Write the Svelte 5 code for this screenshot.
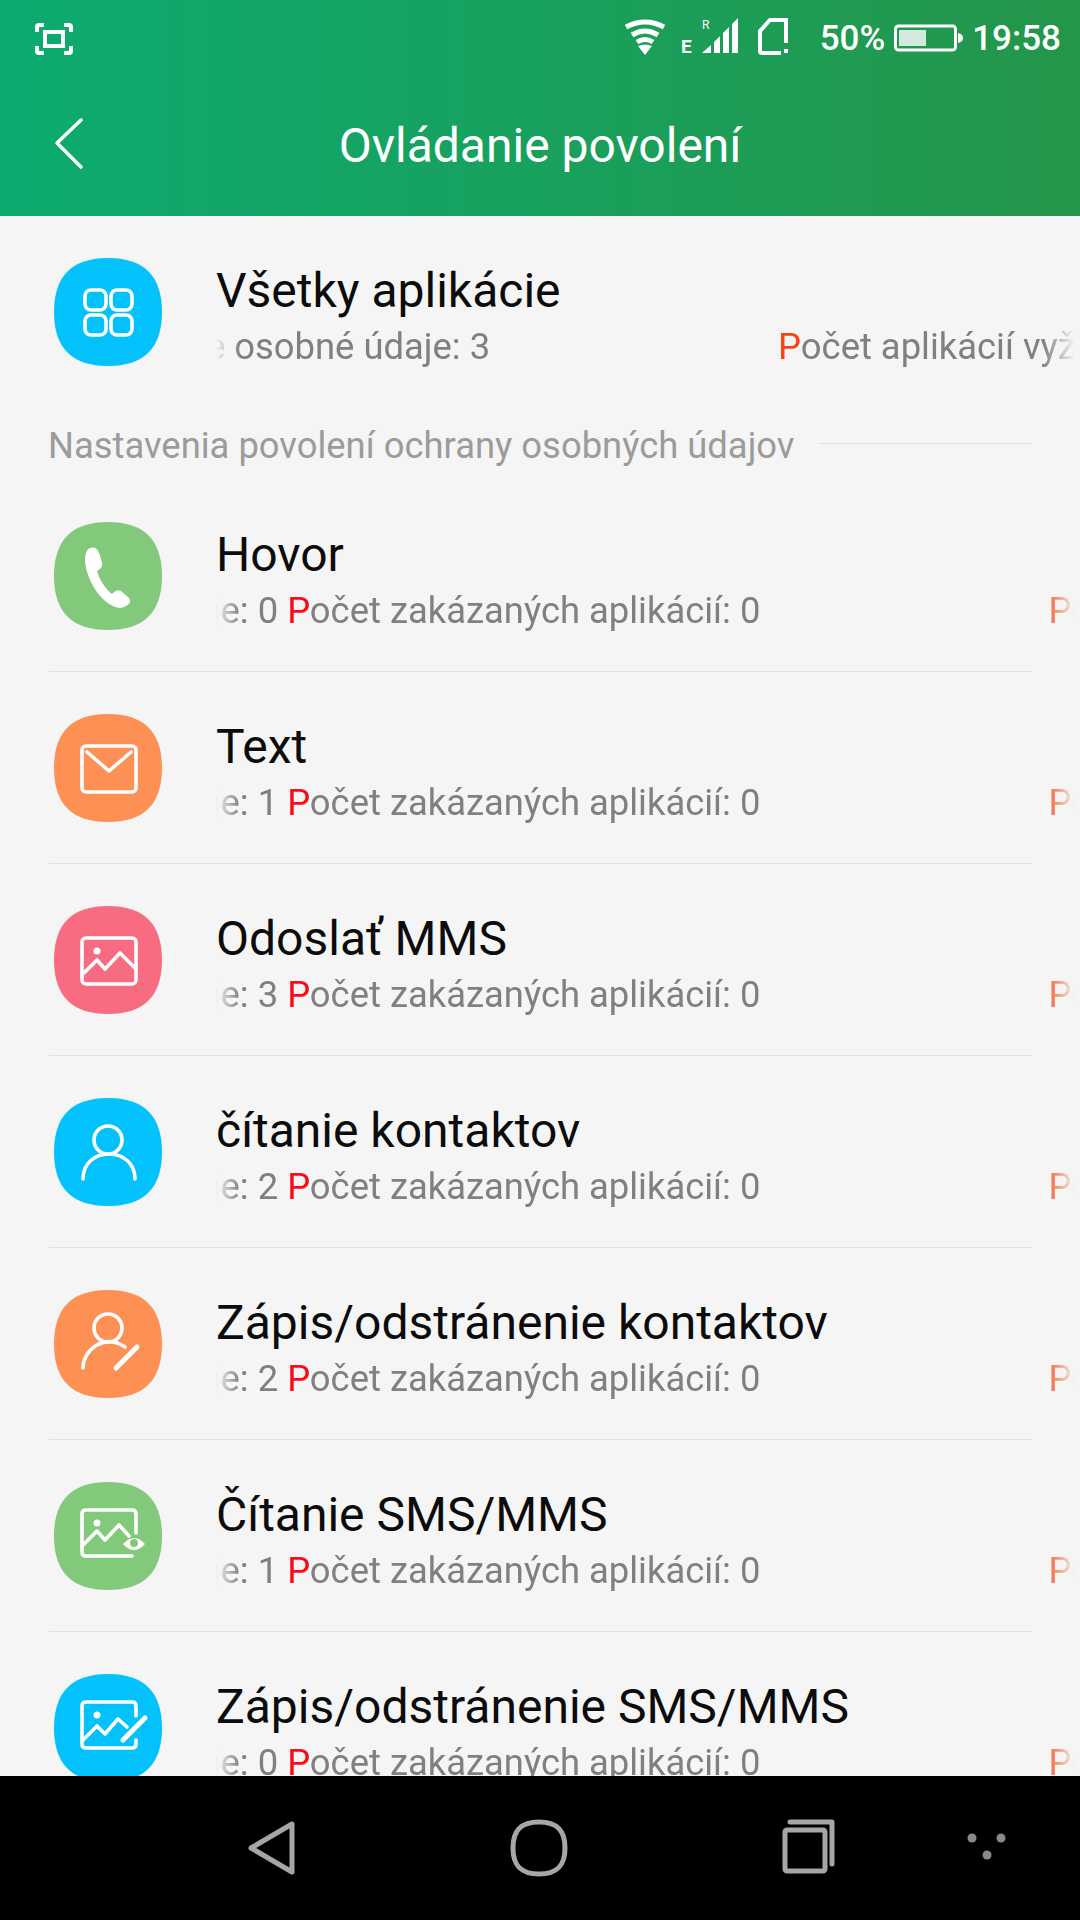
<script lang="ts">
  type Row = { title: string; icon: string; color: string; on: number };

  const rows: Row[] = [
    { title: 'Hovor', icon: 'phone', color: '#82c97c', on: 0 },
    { title: 'Text', icon: 'mail', color: '#fd9155', on: 1 },
    { title: 'Odoslať MMS', icon: 'image', color: '#f76c80', on: 3 },
    { title: 'čítanie kontaktov', icon: 'person', color: '#03c1fb', on: 2 },
    { title: 'Zápis/odstránenie kontaktov', icon: 'personEdit', color: '#fd9155', on: 2 },
    { title: 'Čítanie SMS/MMS', icon: 'imageEye', color: '#82c97c', on: 1 },
    { title: 'Zápis/odstránenie SMS/MMS', icon: 'imageEdit', color: '#03c1fb', on: 0 },
  ];
</script>

{#snippet glyph(name: string)}
  {#if name === 'grid'}
    <rect x="31" y="32" width="21" height="20" rx="6" />
    <rect x="57" y="32" width="21" height="20" rx="6" />
    <rect x="31" y="57" width="21" height="20" rx="6" />
    <rect x="57" y="57" width="21" height="20" rx="6" />
  {:else if name === 'phone'}
    <path class="solid" d="M36 26C41 24 44 27 46 33L48 41C49 45 46 47 43 49C45 57 52 68 58 72C61 69 64 67 67 69L74 75C78 79 76 82 72 84C66 88 58 85 50 78C40 69 32 52 31 40C31 32 32 28 36 26Z" />
  {:else if name === 'mail'}
    <rect x="28" y="32" width="54" height="46" rx="4" />
    <path d="M33 38L55 57L77 38" />
  {:else if name === 'image'}
    <rect x="28" y="32" width="54" height="46" rx="4" />
    <circle class="solid" cx="43" cy="45" r="3.5" />
    <path d="M29 68L43 54L51 63L66 47L82 63" />
  {:else if name === 'person'}
    <circle cx="54" cy="42" r="14" />
    <path d="M29 81C29 65 41 56 55 56C69 56 81 65 81 81" />
  {:else if name === 'personEdit'}
    <circle cx="54" cy="38" r="14" />
    <path d="M29 78C29 60 50 43 71 57" />
    <path class="pen" d="M83 57L62 78" />
  {:else if name === 'imageEye'}
    <path d="M82 51V32Q82 28 78 28H32Q28 28 28 32V70Q28 74 32 74H78" />
    <circle class="solid" cx="43" cy="41" r="3.5" />
    <path d="M29 63L43 49L51 58L65 43L75 54" />
    <path class="solid" d="M69 62Q80 50 91 62Q80 74 69 62Z" />
    <circle class="cut" cx="80" cy="61" r="4" />
  {:else if name === 'imageEdit'}
    <path d="M82 42V32Q82 28 78 28H32Q28 28 28 32V70Q28 74 32 74H78Q82 74 82 70V66" />
    <circle class="solid" cx="43" cy="41" r="3.5" />
    <path d="M29 66L43 52L51 60L64 45L73 53" />
    <path class="pen" d="M91 44L69 66" />
  {/if}
{/snippet}

{#snippet appIcon(name: string, color: string)}
  <svg class="app-icon" viewBox="0 0 108 108" width="108" height="108">
    <path d="M54 0C90 0 108 18 108 54C108 90 90 108 54 108C18 108 0 90 0 54C0 18 18 0 54 0Z" fill={color} />
    <g class="glyph" style="color: {color}">{@render glyph(name)}</g>
  </svg>
{/snippet}

{#snippet counts(on: number)}
  <span class="copy"><span class="orange">P</span>očet aplikácií vyžadujúce osobné údaje: {on} <span class="red">P</span>očet zakázaných aplikácií: 0</span>
{/snippet}

<div class="page">
  <header class="head">
    <div class="status">
      <svg class="shot" width="38" height="32" viewBox="0 0 38 32">
        <path d="M2 9V4Q2 2 4 2H9M29 2H34Q36 2 36 4V9M36 23V28Q36 30 34 30H29M9 30H4Q2 30 2 28V23" />
        <rect x="10" y="9" width="18" height="14" />
      </svg>
      <div class="status-right">
        <svg class="wifi" width="42" height="38" viewBox="0 0 42 38">
          <path d="M2 9Q21 -1 40 9M8 17Q21 9 34 17M13 24Q21 19 29 24" />
          <path class="fill" d="M14 28Q21 25 28 28L21 37Z" />
        </svg>
        <svg class="net" width="57" height="37" viewBox="0 0 57 37">
          <text class="e" x="0" y="35">E</text>
          <text class="r" x="21" y="11">R</text>
          <path d="M21 35L30 27V35ZM33 24L39 18V35H33ZM42 15L48 9V35H42ZM51 6L57 0V35H51Z" />
        </svg>
        <svg class="sim" width="31" height="37" viewBox="0 0 31 37">
          <path d="M23 35H4Q2 35 2 33V13L12 2H28V25" />
          <rect class="fill" x="26" y="31" width="4" height="4" />
        </svg>
        <span class="pct">50%</span>
        <svg class="batt" width="69" height="28" viewBox="0 0 69 28">
          <rect x="1.5" y="2" width="60" height="24" rx="3" />
          <rect class="level" x="5" y="6" width="27" height="16" />
          <path class="fill" d="M64 9Q69 10 69 14Q69 18 64 19Z" />
        </svg>
        <span class="clock">19:58</span>
      </div>
    </div>
    <div class="toolbar">
      <svg class="back" width="30" height="54" viewBox="0 0 30 54">
        <path d="M27 3L3 26L27 50" />
      </svg>
      <h1>Ovládanie povolení</h1>
      <span></span>
    </div>
  </header>

  <main class="content">
    <section class="row all">
      {@render appIcon('grid', '#03c1fb')}
      <div class="text">
        <div class="title">Všetky aplikácie</div>
        <div class="marquee">
          <div class="track first">
            <span class="copy"><span class="orange">P</span>očet aplikácií vyžadujúce osobné údaje: 3</span>
            <span class="copy"><span class="orange">P</span>očet aplikácií vyžadujúce osobné údaje: 3</span>
          </div>
        </div>
      </div>
    </section>

    <div class="section">
      <span>Nastavenia povolení ochrany osobných údajov</span>
      <i></i>
    </div>

    {#each rows as row}
      <section class="row item">
        {@render appIcon(row.icon, row.color)}
        <div class="text">
          <div class="title">{row.title}</div>
          <div class="marquee">
            <div class="track">
              {@render counts(row.on)}
              {@render counts(row.on)}
            </div>
          </div>
        </div>
      </section>
    {/each}
  </main>

  <nav class="nav">
    <svg class="nav-back" width="60" height="60" viewBox="0 0 60 60">
      <path d="M51 6V54L10 30Z" />
    </svg>
    <svg class="nav-home" width="60" height="60" viewBox="0 0 60 60">
      <path d="M30 4C48 4 56 12 56 30C56 48 48 56 30 56C12 56 4 48 4 30C4 12 12 4 30 4Z" />
    </svg>
    <svg class="nav-recent" width="60" height="60" viewBox="0 0 60 60">
      <rect x="7" y="12" width="40" height="41" rx="2" />
      <path d="M12 4H54V46" />
    </svg>
    <svg class="nav-more" width="60" height="60" viewBox="0 0 60 60">
      <circle cx="15" cy="20" r="4.5" />
      <circle cx="44" cy="20" r="4.5" />
      <circle cx="30" cy="37" r="4.5" />
    </svg>
  </nav>
</div>

<style>
  :global(body) {
    margin: 0;
    background: #f5f5f5;
  }

  .page {
    width: 1080px;
    height: 1920px;
    display: flex;
    flex-direction: column;
    overflow: hidden;
    background: #f5f5f5;
    font-family: Roboto, "Noto Sans", sans-serif;
  }

  .head {
    height: 216px;
    flex: none;
    color: #fff;
    background: linear-gradient(90deg, #0cab70, #24964a);
  }

  .status {
    height: 72px;
    box-sizing: border-box;
    padding: 18px 19px 0 35px;
    display: flex;
    justify-content: space-between;
  }

  .status svg {
    display: block;
    fill: none;
    stroke: #fff;
    stroke-width: 4;
  }

  .status .fill,
  .status text,
  .status .net path {
    fill: #fff;
    stroke: none;
  }

  .shot {
    margin-top: 5px;
  }

  .status-right {
    display: flex;
  }

  .wifi path {
    stroke-width: 5;
  }

  .e {
    font: 700 19px Roboto, sans-serif;
  }

  .r {
    font: 400 12px Roboto, sans-serif;
  }

  .net {
    margin-left: 15px;
  }

  .sim {
    margin-left: 20px;
  }

  .batt {
    margin: 6px 0 0 9px;
  }

  .status .batt rect {
    stroke-width: 3;
  }

  .status .batt .level {
    fill: #d5eade;
    stroke: none;
  }

  .pct,
  .clock {
    font-size: 35px;
    font-weight: 500;
    line-height: 42px;
  }

  .pct {
    margin-left: 31px;
  }

  .clock {
    margin-left: 9px;
  }

  .toolbar {
    height: 144px;
    display: grid;
    grid-template-columns: 1fr auto 1fr;
    align-items: center;
    padding-left: 54px;
    padding-right: 54px;
  }

  .back {
    fill: none;
    stroke: #fff;
    stroke-width: 3.5;
    stroke-linecap: round;
    stroke-linejoin: round;
  }

  h1 {
    margin: 4px 0 0;
    font-size: 48px;
    font-weight: 400;
    line-height: 56px;
  }

  .content {
    flex: 1;
    min-height: 0;
    overflow: hidden;
  }

  .row {
    box-sizing: border-box;
    margin: 0 0 0 49px;
    display: flex;
    align-items: center;
    gap: 54px;
    padding-left: 5px;
  }

  .row.all {
    height: 192px;
  }

  .row.item {
    height: 192px;
    position: relative;
  }

  .row.item::after {
    content: "";
    position: absolute;
    left: 0;
    right: 48px;
    bottom: 0;
    height: 1px;
    background: #e2e2e2;
  }

  .app-icon {
    flex: none;
    display: block;
  }

  .glyph {
    fill: none;
    stroke: #fff;
    stroke-width: 3.6;
    stroke-linecap: round;
    stroke-linejoin: round;
  }

  .glyph :global(.solid) {
    fill: #fff;
    stroke: none;
  }

  .glyph :global(.cut) {
    fill: currentColor;
    stroke: none;
  }

  .glyph :global(.pen) {
    stroke-width: 5;
  }

  .text {
    flex: 1;
    min-width: 0;
    margin-top: 6px;
  }

  .title {
    font-size: 48px;
    line-height: 56px;
    color: #0c0c0c;
    white-space: nowrap;
  }

  .marquee {
    margin-top: 7px;
    margin-right: 5px;
    overflow: hidden;
    line-height: 42px;
    font-size: 36.4px;
    color: #808080;
    -webkit-mask-image: linear-gradient(90deg, transparent 0, #000 24px, #000 calc(100% - 32px), transparent 100%);
    mask-image: linear-gradient(90deg, transparent 0, #000 24px, #000 calc(100% - 32px), transparent 100%);
  }

  .track {
    display: flex;
    gap: 288px;
    white-space: nowrap;
    margin-left: -628px;
  }

  .track.first {
    margin-left: -416px;
  }

  .copy {
    flex: none;
  }

  .orange {
    color: #f5460f;
  }

  .red {
    color: #fa0a14;
  }

  .section {
    height: 72px;
    margin: 0 48px 0 48px;
    display: flex;
    align-items: center;
    gap: 24px;
    font-size: 36.4px;
    line-height: 42px;
    color: #9b9b9b;
    white-space: nowrap;
  }

  .section span {
    padding-top: 3px;
  }

  .section i {
    flex: 1;
    height: 1px;
    background: #e2e2e2;
    margin-top: -2px;
  }

  .nav {
    height: 144px;
    flex: none;
    background: #000;
    display: flex;
    align-items: center;
    padding-left: 241px;
  }

  .nav svg {
    display: block;
    fill: none;
    stroke: #a6a6a6;
    stroke-width: 5;
    stroke-linejoin: round;
    stroke-linecap: round;
  }

  .nav-home {
    margin-left: 208px;
  }

  .nav-recent {
    margin-left: 209px;
  }

  .nav-more {
    margin-left: 119px;
  }

  .nav .nav-more {
    fill: #8a8a8a;
    stroke: none;
  }
</style>
